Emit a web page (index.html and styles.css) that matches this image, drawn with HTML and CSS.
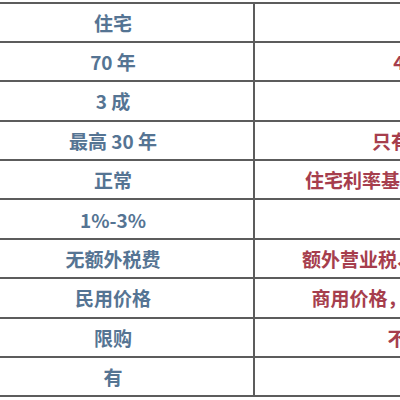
FILE: index.html
```html
<!DOCTYPE html>
<html lang="zh">
<head>
<meta charset="utf-8">
<link rel="stylesheet" href="styles.css">
</head>
<body>
<div class="table">
  <div class="row"><div class="cell left">住宅</div><div class="cell right">商</div></div>
  <div class="row"><div class="cell left">70 年</div><div class="cell right">40 年</div></div>
  <div class="row"><div class="cell left">3 成</div><div class="cell right">5成</div></div>
  <div class="row"><div class="cell left">最高 30 年</div><div class="cell right">只有 10 年</div></div>
  <div class="row"><div class="cell left">正常</div><div class="cell right">住宅利率基础上浮10-20%</div></div>
  <div class="row"><div class="cell left">1%-3%</div><div class="cell right">3%</div></div>
  <div class="row"><div class="cell left">无额外税费</div><div class="cell right">额外营业税、土地增值税等</div></div>
  <div class="row"><div class="cell left">民用价格</div><div class="cell right">商用价格，水电费用较高</div></div>
  <div class="row"><div class="cell left">限购</div><div class="cell right">不限购</div></div>
  <div class="row"><div class="cell left">有</div><div class="cell right">无</div></div>
</div>
</body>
</html>
```

FILE: styles.css
```css
html, body {
  margin: 0;
  padding: 0;
  background: #ffffff;
  overflow: hidden;
}
body {
  width: 400px;
  height: 400px;
  font-family: "Noto Sans CJK SC", "Noto Sans", sans-serif;
  font-weight: 700;
  font-size: 19px;
}
.table {
  display: flex;
  flex-direction: column;
  width: 610px;
  margin-left: -27px;
  margin-top: 1.5px;
  border-top: 2px solid #5c5c5c;
}
.row {
  display: grid;
  grid-template-columns: 282px 322px;
  height: 37.4px;
  border-bottom: 2px solid #5c5c5c;
}
.cell {
  display: flex;
  align-items: center;
  justify-content: center;
  white-space: nowrap;
  line-height: 1;
}
.left {
  color: #557493;
  border-right: 2px solid #5c5c5c;
}
.right {
  color: #a63e4d;
}
```
